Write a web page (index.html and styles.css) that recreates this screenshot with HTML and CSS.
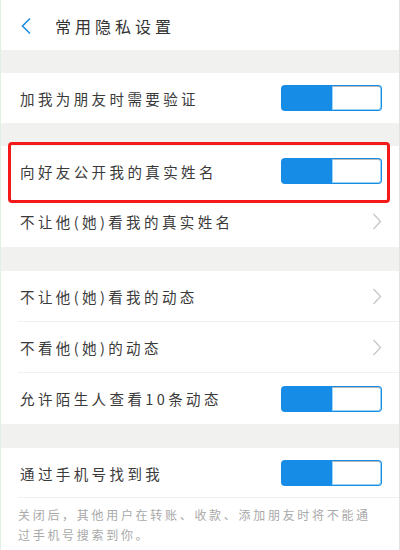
FILE: index.html
```html
<!DOCTYPE html>
<html lang="zh">
<head>
<meta charset="utf-8">
<link rel="stylesheet" href="styles.css">
</head>
<body>
<div class="page">
  <header class="topbar">
    <svg class="back" width="12" height="18" viewBox="0 0 12 18"><path d="M10 1.5 L2.5 9 L10 16.5" fill="none" stroke="#1a8fe3" stroke-width="1.6"/></svg>
    <span class="title">常用隐私设置</span>
  </header>

  <section class="group g1">
    <div class="row"><span class="label">加我为朋友时需要验证</span><span class="toggle"><span class="knob"></span></span></div>
  </section>

  <section class="group g2">
    <div class="row"><span class="label">向好友公开我的真实姓名</span><span class="toggle"><span class="knob"></span></span></div>
    <div class="row"><span class="label">不让他(她)看我的真实姓名</span><svg class="chev" width="10" height="17" viewBox="0 0 10 17"><path d="M1.5 1 L8.5 8.5 L1.5 16" fill="none" stroke="#c6c6c6" stroke-width="1.3"/></svg></div>
    <div class="highlight"></div>
  </section>

  <section class="group g3">
    <div class="row divided"><span class="label">不让他(她)看我的动态</span><svg class="chev" width="10" height="17" viewBox="0 0 10 17"><path d="M1.5 1 L8.5 8.5 L1.5 16" fill="none" stroke="#c6c6c6" stroke-width="1.3"/></svg></div>
    <div class="row divided"><span class="label">不看他(她)的动态</span><svg class="chev" width="10" height="17" viewBox="0 0 10 17"><path d="M1.5 1 L8.5 8.5 L1.5 16" fill="none" stroke="#c6c6c6" stroke-width="1.3"/></svg></div>
    <div class="row"><span class="label">允许陌生人查看10条动态</span><span class="toggle"><span class="knob"></span></span></div>
  </section>

  <section class="group g4">
    <div class="row divided"><span class="label">通过手机号找到我</span><span class="toggle"><span class="knob"></span></span></div>
    <p class="note">关闭后，其他用户在转账、收款、添加朋友时将不能通过手机号搜索到你。</p>
  </section>
</div>
</body>
</html>
```

FILE: styles.css
```css
html, body {
  margin: 0;
  padding: 0;
}
body {
  background: #f1f1ef;
  font-family: "Noto Sans CJK SC", "Noto Sans", sans-serif;
  color: #3a3a3a;
}
.page {
  width: 400px;
  height: 550px;
  overflow: hidden;
  border-left: 1px solid #e4efe4;
  border-right: 1px solid #e2e2e2;
  box-sizing: border-box;
}
.topbar {
  height: 50px;
  background: #fff;
  display: flex;
  align-items: center;
  padding-left: 19px;
  box-sizing: border-box;
}
.back {
  display: block;
  margin-top: 2px;
}
.title {
  margin-left: 23px;
  font-size: 16px;
  letter-spacing: 4px;
  color: #333;
  margin-top: 2px;
}
.group {
  background: #fff;
  position: relative;
}
.g1 { margin-top: 23px; }
.g2 { margin-top: 23px; }
.g3 { margin-top: 24px; }
.g4 { margin-top: 24px; }
.row {
  height: 50px;
  display: flex;
  align-items: center;
  justify-content: space-between;
  padding: 0 16px 0 19px;
  position: relative;
  box-sizing: border-box;
}
.g3 .row { height: 51px; }
.g2 .row { height: 50.5px; }
.row.divided::after {
  content: "";
  position: absolute;
  left: 17px;
  right: 0;
  bottom: 0;
  height: 1px;
  background: #f0f0f0;
}
.label {
  font-size: 14.5px;
  letter-spacing: 3.4px;
  color: #3a3a3a;
}
.toggle {
  width: 101px;
  height: 26px;
  background: #168ce6;
  border-radius: 4px;
  display: flex;
  justify-content: flex-end;
  padding: 1px;
  box-sizing: border-box;
  margin-right: 1px;
}
.knob {
  width: 49px;
  height: 100%;
  background: #fff;
  border-radius: 0 3px 3px 0;
  box-sizing: border-box;
  border: 1px solid #9ad4f4;
  border-top-color: #b8b8b8;
}
.chev {
  display: block;
  margin-right: 1px;
}
.note {
  margin: 0;
  padding: 7px 26px 10px 17px;
  font-size: 12px;
  line-height: 20px;
  letter-spacing: 2.7px;
  color: #a9a9a9;
}
.highlight {
  position: absolute;
  left: 7px;
  top: -4px;
  width: 382px;
  height: 61px;
  border: 3px solid #f51a1a;
  border-radius: 4px;
  box-sizing: border-box;
  pointer-events: none;
}
```
